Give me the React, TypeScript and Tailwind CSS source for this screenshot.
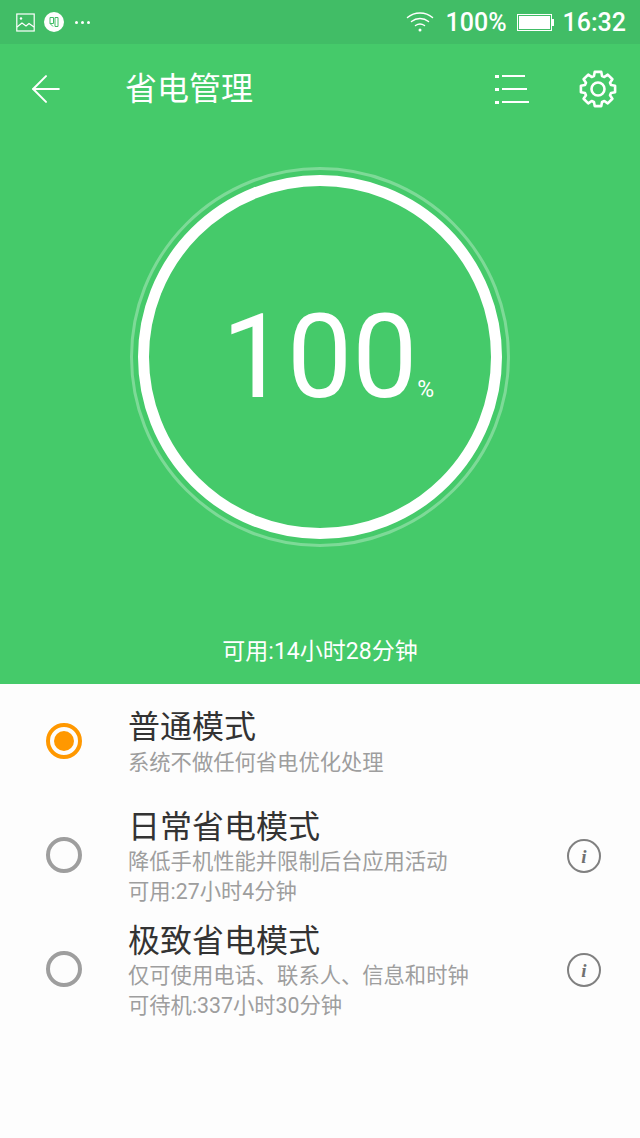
import { ArrowLeft } from "lucide-react";

const modes = [
  {
    title: "普通模式",
    lines: ["系统不做任何省电优化处理"],
    active: true,
    rowClass: "h-[105px] pt-[23px]",
    subClass: "mt-[1px]",
    radioClass: "mt-[16px]",
  },
  {
    title: "日常省电模式",
    lines: ["降低手机性能并限制后台应用活动", "可用:27小时4分钟"],
    active: false,
    rowClass: "h-[114px] pt-[18px]",
    subClass: "",
    radioClass: "mt-[30px]",
  },
  {
    title: "极致省电模式",
    lines: ["仅可使用电话、联系人、信息和时钟", "可待机:337小时30分钟"],
    active: false,
    rowClass: "h-[114px] pt-[18px]",
    subClass: "",
    radioClass: "mt-[30px]",
  },
];

// 8 teeth, drawn from the center so each one gets the same shape
function gearPath() {
  const points: string[] = [];
  for (let i = 0; i < 8; i++) {
    const mid = (i * Math.PI) / 4 - Math.PI / 2;
    const corners: [number, number][] = [
      [13.6, -0.3],
      [17.4, -0.19],
      [17.4, 0.19],
      [13.6, 0.3],
    ];
    for (const [radius, offset] of corners) {
      const x = 19 + radius * Math.cos(mid + offset);
      const y = 19 + radius * Math.sin(mid + offset);
      points.push(`${x.toFixed(2)} ${y.toFixed(2)}`);
    }
  }
  return `M${points.join("L")}Z`;
}

function GearIcon() {
  return (
    <svg width="38" height="38" viewBox="0 0 38 38" fill="none" stroke="white" strokeWidth="2.600" strokeLinejoin="round">
      <path d={gearPath()} />
      <circle cx="19" cy="19" r="6.500" />
    </svg>
  );
}

function StatusBar() {
  return (
    <div className="flex h-11 items-center bg-[#41bd66] pl-4 pr-[14px] text-white">
      <svg width="19" height="19" viewBox="0 0 19 19" fill="none" stroke="white" strokeWidth="1.200">
        <rect x="0.800" y="1" width="17.400" height="17" />
        <path d="M1 14l5-4 4 3 3-2.500 5 3.500" />
        <circle cx="5" cy="5.500" r="1.200" fill="white" stroke="none" />
      </svg>
      <div className="ml-[9px] flex h-5 w-5 items-center justify-center rounded-full bg-white">
        <svg width="12" height="12" viewBox="0 0 12 12" fill="none" stroke="#41bd66" strokeWidth="1">
          <path d="M2 1.500h3.500v6H2zM7 1.500h3v9H7zM2 7.500l3 3" />
        </svg>
      </div>
      <div className="ml-[11px] flex gap-[3px]">
        <span className="h-[3px] w-[3px] rounded-full bg-white" />
        <span className="h-[3px] w-[3px] rounded-full bg-white" />
        <span className="h-[3px] w-[3px] rounded-full bg-white" />
      </div>
      <svg className="ml-auto" width="28" height="22" viewBox="0 0 28 22" fill="none" stroke="white" strokeWidth="1.500" strokeLinecap="round">
        <path d="M1.500 6.500c7-6 18-6 25 0" />
        <path d="M5.500 10.500c5-4 12-4 17 0" />
        <path d="M9.500 14.500c3-2 6-2 9 0" />
        <circle cx="14" cy="19" r="1.500" fill="white" stroke="none" />
      </svg>
      <span className="ml-[12px] font-['Roboto',sans-serif] text-[25px] leading-none font-medium">100%</span>
      <div className="ml-[10px] flex items-center">
        <div className="h-[17px] w-[35px] border border-white p-[1px]">
          <div className="h-full w-full bg-white" />
        </div>
        <div className="h-[7px] w-[2px] bg-white" />
      </div>
      <span className="ml-[9px] font-['Roboto',sans-serif] text-[25px] leading-none font-medium">16:32</span>
    </div>
  );
}

function ListBar(props: { barClass: string }) {
  return (
    <div className="flex items-center gap-[3px]">
      <span className="h-[3px] w-[4px] bg-white" />
      <span className={`h-[2px] bg-white ${props.barClass}`} />
    </div>
  );
}

function ModeRow(props: {
  title: string;
  lines: string[];
  active: boolean;
  rowClass: string;
  subClass: string;
  radioClass: string;
}) {
  return (
    <div className={`flex ${props.rowClass}`}>
      <div className="w-[128px] shrink-0 pl-[46px]">
        {props.active ? (
          <div className={`flex h-9 w-9 items-center justify-center rounded-full border-[4px] border-[#ff9800] ${props.radioClass}`}>
            <div className="h-5 w-5 rounded-full bg-[#ff9800]" />
          </div>
        ) : (
          <div className={`h-9 w-9 rounded-full border-[4px] border-[#9e9e9e] ${props.radioClass}`} />
        )}
      </div>
      <div className="min-w-0 flex-1">
        <div className="text-[32px] leading-[40px] text-[#333333]">{props.title}</div>
        <div className={props.subClass}>
          {props.lines.map((line) => (
            <div key={line} className="text-[21.300px] leading-[30px] text-[#9e9e9e]">
              {line}
            </div>
          ))}
        </div>
      </div>
      {props.active ? null : (
        <div className="mr-[39px] mt-[32px] flex h-[34px] w-[34px] items-center justify-center rounded-full border-2 border-[#808080] font-['Liberation_Serif',serif] text-[19px] font-bold italic leading-none text-[#707070]">
          i
        </div>
      )}
    </div>
  );
}

export default function App() {
  return (
    <main className="flex min-h-[1138px] flex-col bg-[#fdfdfd] font-['Roboto','Noto_Sans_CJK_SC',sans-serif]">
      <section className="flex h-[684px] flex-col bg-[#45ca6a] text-white">
        <StatusBar />
        <header className="flex h-[90px] items-center">
          <ArrowLeft className="ml-[24px]" size={44} strokeWidth={2} absoluteStrokeWidth />
          <h1 className="ml-[57px] text-[32px] leading-none">省电管理</h1>
          <div className="ml-auto flex w-[34px] flex-col gap-[10px]">
            <ListBar barClass="w-[23px]" />
            <ListBar barClass="w-[25px]" />
            <ListBar barClass="w-[27px]" />
          </div>
          <div className="ml-[50px] mr-[23px]">
            <GearIcon />
          </div>
        </header>
        <div className="mt-[33px] flex justify-center">
          <div className="flex h-[380px] w-[380px] items-center justify-center rounded-full border-[3px] border-white/30">
            <div className="flex h-[364px] w-[364px] items-center justify-center rounded-full border-[11px] border-white">
              <div className="flex items-baseline pl-[16px]">
                <span className="text-[116px] leading-none font-normal">100</span>
                <span className="text-[23px] leading-none font-normal">%</span>
              </div>
            </div>
          </div>
        </div>
        <p className="mt-[90px] text-center text-[23px] leading-[30px]">可用:14小时28分钟</p>
      </section>
      <ModeRow {...modes[0]} />
      <ModeRow {...modes[1]} />
      <ModeRow {...modes[2]} />
    </main>
  );
}
